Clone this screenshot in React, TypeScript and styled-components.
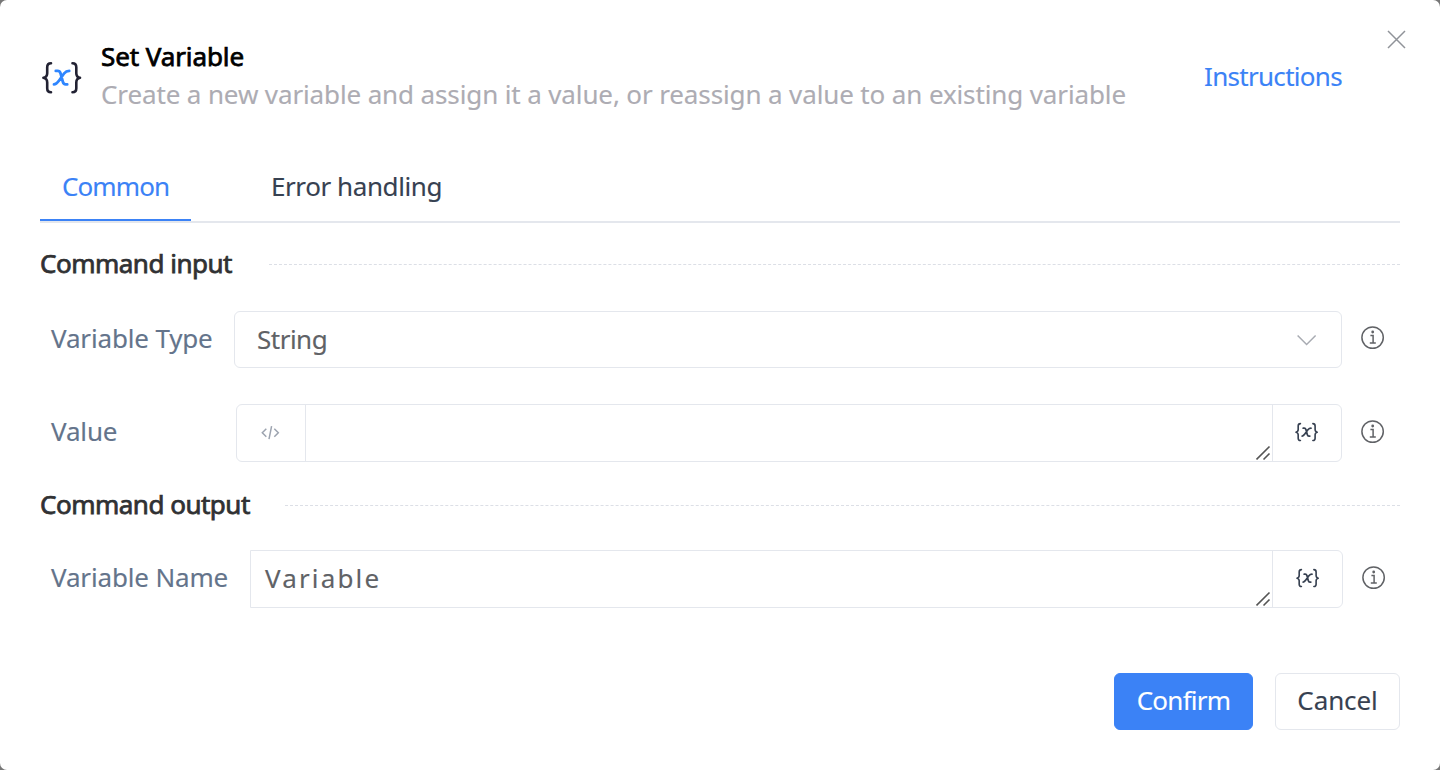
import React from "react";
import styled, { createGlobalStyle } from "styled-components";

const GlobalStyle = createGlobalStyle`
  * { box-sizing: border-box; }
  body { margin: 0; background: #777; font-family: "Noto Sans", "Open Sans", sans-serif; font-size: 26px; }
`;

const Dialog = styled.div`
  display: flex;
  flex-direction: column;
  width: 1440px;
  height: 770px;
  padding: 37px 40px 40px;
  background: #fff;
  border-radius: 7px;
  position: relative;
  overflow: hidden;
  -webkit-text-stroke: 0.12px currentColor;
`;

const Header = styled.header`
  display: flex;
  align-items: center;
  height: 76px;
  padding-right: 58px;
`;

const HeaderText = styled.div`
  flex: 1;
  margin-left: 18px;
  line-height: 38px;
  white-space: nowrap;
`;

const Title = styled.div`
  color: #000;
  letter-spacing: -0.1px;
  -webkit-text-stroke: 0.75px #000;
`;

const Description = styled.div`
  color: #adacb3;
  letter-spacing: -0.125px;
`;

const Link = styled.a`
  color: #3b82f6;
  letter-spacing: -0.7px;
  padding-top: 2px;
`;

const LogoSlot = styled.div`
  display: flex;
  padding-top: 5px;
`;

const CloseButton = styled.button`
  position: absolute;
  top: 29px;
  right: 33px;
  width: 21px;
  height: 21px;
  padding: 0;
  border: 0;
  background: none;
  svg { display: block; }
`;

const Tabs = styled.nav`
  display: flex;
  height: 72px;
  margin-top: 38px;
  border-bottom: 2px solid #e4e7ed;
`;

const Tab = styled.div<{ $active?: boolean; $width: number; $spacing: number }>`
  width: ${(p) => p.$width}px;
  height: 70px;
  margin-right: 58px;
  padding-left: 22px;
  line-height: 70px;
  letter-spacing: ${(p) => p.$spacing}px;
  white-space: nowrap;
  color: ${(p) => (p.$active ? "#3b82f6" : "#374151")};
  border-bottom: 2px solid ${(p) => (p.$active ? "#3b82f6" : "transparent")};
`;

const Section = styled.div<{ $top: number }>`
  display: flex;
  align-items: center;
  height: 40px;
  margin-top: ${(p) => p.$top}px;
  &::after { content: ""; flex: 1; border-top: 1px dashed #dcdfe6; }
`;

const SectionTitle = styled.h3<{ $width: number }>`
  width: ${(p) => p.$width}px;
  margin: 0;
  padding-bottom: 2px;
  color: #303133;
  font-size: inherit;
  font-weight: 400;
  letter-spacing: -0.5px;
  -webkit-text-stroke: 0.75px #303133;
  white-space: nowrap;
`;

const Row = styled.div<{ $top: number; $height: number }>`
  display: flex;
  align-items: center;
  height: ${(p) => p.$height}px;
  margin-top: ${(p) => p.$top}px;
`;

const Label = styled.label<{ $width: number }>`
  width: ${(p) => p.$width}px;
  padding-left: 11px;
  padding-bottom: 4px;
  color: #64748b;
  letter-spacing: -0.16px;
  white-space: nowrap;
`;

const Select = styled.div`
  display: flex;
  align-items: center;
  justify-content: space-between;
  width: 1108px;
  height: 57px;
  padding: 0 24px 0 22px;
  border: 1px solid #e4e7ed;
  border-radius: 6px;
  color: #606266;
  line-height: 53px;
  letter-spacing: -0.5px;
`;

const Group = styled.div<{ $width: number; $square?: boolean }>`
  display: flex;
  width: ${(p) => p.$width}px;
  height: 58px;
  border: 1px solid #e4e7ed;
  border-radius: ${(p) => (p.$square ? "0 6px 6px 0" : "6px")};
`;

const Addon = styled.div<{ $side: "left" | "right"; $width: number }>`
  display: flex;
  align-items: center;
  justify-content: center;
  width: ${(p) => p.$width}px;
  padding: ${(p) => (p.$side === "left" ? "0 2px 1px 0" : "0 1px 2px 0")};
  border-${(p) => (p.$side === "left" ? "right" : "left")}: 1px solid #e4e7ed;
`;

const Area = styled.div`
  flex: 1;
  display: flex;
  justify-content: space-between;
  align-items: flex-end;
  padding: 0 0 0 14px;
  color: #606266;
  line-height: 54px;
  letter-spacing: 2.15px;
  span { padding-bottom: 2px; }
`;

const InfoSlot = styled.div`
  display: flex;
  margin-left: 19px;
  padding-bottom: 3px;
`;

const Footer = styled.footer`
  display: flex;
  justify-content: flex-end;
  gap: 22px;
  margin-top: auto;
`;

const Button = styled.button<{ $primary?: boolean; $width: number }>`
  width: ${(p) => p.$width}px;
  height: 57px;
  padding: 0 0 3px;
  border: 1px solid ${(p) => (p.$primary ? "#3b82f6" : "#e4e7ed")};
  border-radius: 6px;
  background: ${(p) => (p.$primary ? "#3b82f6" : "#fff")};
  color: ${(p) => (p.$primary ? "#fff" : "#374151")};
  font: inherit;
  letter-spacing: ${(p) => (p.$primary ? -0.75 : -0.1)}px;
  line-height: 52px;
`;

const VariableIcon = ({ width, height, brace, letter, weight }: { width: number; height: number; brace: string; letter: string; weight: number }) => (
  <svg width={width} height={height} viewBox="0 0 43 33" fill="none" strokeWidth={weight} strokeLinecap="round" strokeLinejoin="round">
    <path stroke={brace} d="M11 2.2C8 2.2 7.2 3.6 7.2 6.2V12.2C7.2 14.8 6 16.3 3.4 16.8C6 17.3 7.2 18.8 7.2 21.4V27.2C7.2 29.8 8 31.2 11 31.2" />
    <path stroke={brace} d="M32.5 2.2C35.5 2.2 36.3 3.6 36.3 6.2V12.2C36.3 14.8 37.5 16.3 40 16.8C37.5 17.3 36.3 18.8 36.3 21.4V27.2C36.3 29.8 35.5 31.2 32.5 31.2" />
    <path stroke={letter} strokeWidth={weight + 0.2} d="M15.8 9.9H17.6C19.4 9.9 20 10.7 20.5 12.2L22.8 20.7C23.3 22.6 23.9 23.4 25.6 23.4H27.2M29.2 9.9C26.9 9.9 25.6 10.7 23.9 12.7L18.9 19.7C17.1 22.2 16.1 23.4 14 23.4" />
  </svg>
);

const InfoIcon = () => (
  <InfoSlot>
    <svg width="24" height="24" viewBox="0 0 24 24" fill="none" stroke="#606266" strokeWidth="1.5">
      <circle cx="11.6" cy="11.6" r="10.7" />
      <path d="M9.4 9.4H12.1V16.8M8.8 16.9H14.8" />
      <circle cx="11.7" cy="6" r="1.4" fill="#606266" stroke="none" />
    </svg>
  </InfoSlot>
);

const ResizeGrip = () => (
  <svg width="16" height="16" viewBox="0 0 16 16" fill="none" stroke="#555" strokeWidth="1.6">
    <path d="M0.5 14.5L13.5 1.5M7.5 14.5L13.5 8.5" />
  </svg>
);

export default function App() {
  return (
    <>
      <GlobalStyle />
      <Dialog>
        <Header>
          <LogoSlot>
            <VariableIcon width={43} height={33} brace="#222233" letter="#2f86ff" weight={2.6} />
          </LogoSlot>
          <HeaderText>
            <Title>Set Variable</Title>
            <Description>Create a new variable and assign it a value, or reassign a value to an existing variable</Description>
          </HeaderText>
          <Link>Instructions</Link>
        </Header>
        <CloseButton aria-label="Close">
          <svg width="21" height="21" viewBox="0 0 21 21" stroke="#909399" strokeWidth="1.5">
            <path d="M2 2L19 19M19 2L2 19" />
          </svg>
        </CloseButton>
        <Tabs>
          <Tab $active $width={151} $spacing={-0.9}>Common</Tab>
          <Tab $width={215} $spacing={-0.42}>Error handling</Tab>
        </Tabs>
        <Section $top={21}><SectionTitle $width={229}>Command input</SectionTitle></Section>
        <Row $top={27} $height={57}>
          <Label $width={194}>Variable Type</Label>
          <Select>
            <span>String</span>
            <svg width="20" height="12" viewBox="0 0 20 12" fill="none" stroke="#a8abb2" strokeWidth="1.5">
              <path d="M0.6 1.5L9.6 10.5L18.6 1.5" />
            </svg>
          </Select>
          <InfoIcon />
        </Row>
        <Row $top={36} $height={58}>
          <Label $width={196}>Value</Label>
          <Group $width={1106}>
            <Addon $side="left" $width={69}>
              <svg width="20" height="14" viewBox="0 0 20 14" fill="none" stroke="#9ca3af" strokeWidth="1.5">
                <path d="M6.3 2.7L2.3 6.7L6.3 10.7M14.3 2.7L18.3 6.7L14.3 10.7M11.6 0.2L9 13.2" />
              </svg>
            </Addon>
            <Area><span /><ResizeGrip /></Area>
            <Addon $side="right" $width={69}>
              <VariableIcon width={25} height={20} brace="#374151" letter="#374151" weight={2.8} />
            </Addon>
          </Group>
          <InfoIcon />
        </Row>
        <Section $top={23}><SectionTitle $width={245}>Command output</SectionTitle></Section>
        <Row $top={25} $height={58}>
          <Label $width={210}>Variable Name</Label>
          <Group $width={1093} $square>
            <Area><span>Variable</span><ResizeGrip /></Area>
            <Addon $side="right" $width={70}>
              <VariableIcon width={25} height={20} brace="#374151" letter="#374151" weight={2.8} />
            </Addon>
          </Group>
          <InfoIcon />
        </Row>
        <Footer>
          <Button $primary $width={139}>Confirm</Button>
          <Button $width={125}>Cancel</Button>
        </Footer>
      </Dialog>
    </>
  );
}
